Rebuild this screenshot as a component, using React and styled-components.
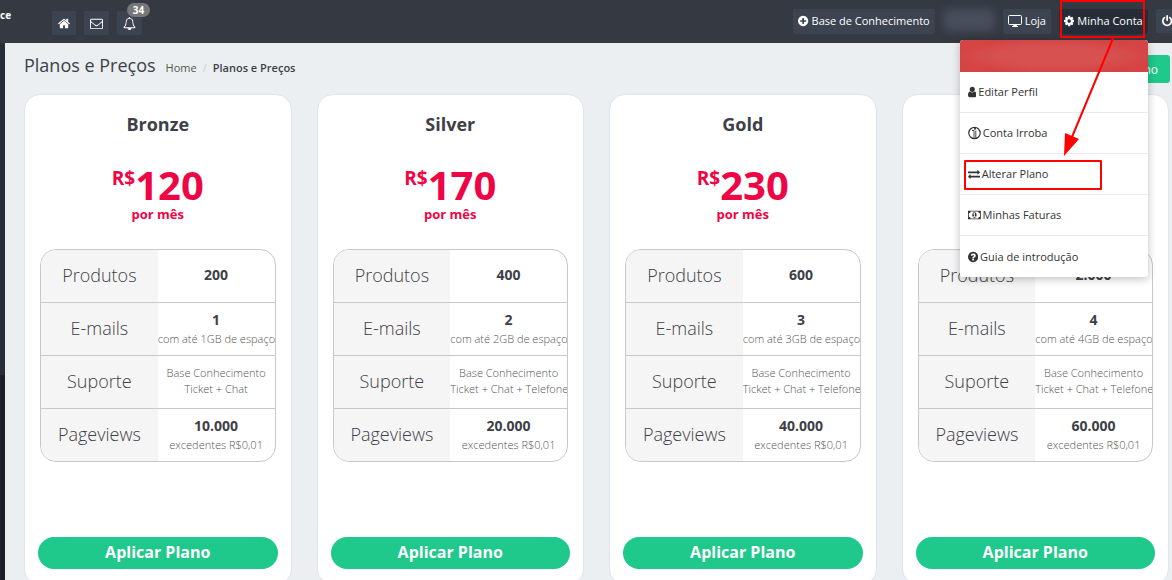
import styled, { createGlobalStyle } from "styled-components"

const GlobalStyle = createGlobalStyle`
    * {
        box-sizing: border-box;
    }

    body {
        margin: 0;
        background-color: #ebeff2;
        color: #3e4047;
        font-family: "Open Sans", "Noto Sans", sans-serif;
        font-size: 12px;
        overflow-x: hidden;
    }

    button {
        font-family: inherit;
        border: none;
        cursor: pointer;
    }
`

const green = "#1ec98b"
const mark = "#ff0000"

/* icons: [viewBox, path] */
const circle =
    "M1664 896q0 209-103 385.5t-279.5 279.5-385.5 103-385.5-103-279.5-279.5-103-385.5 103-385.5 279.5-279.5 385.5-103 385.5 103 279.5 279.5 103 385.5z"

const icons = {
    home: [
        "64 0 1664 1792",
        "M1472 992v480q0 26-19 45t-45 19h-384v-384h-256v384h-384q-26 0-45-19t-19-45v-480q0-1 .5-3t.5-3l575-474 575 474q1 2 1 6zm223-69l-62 74q-8 9-21 11h-3q-13 0-21-7l-692-577-692 577q-12 8-24 7-13-2-21-11l-62-74q-8-10-7-23.5t11-21.5l719-599q32-26 76-26t76 26l244 204v-195q0-14 9-23t23-9h192q14 0 23 9t9 23v408l219 182q10 8 11 21.5t-7 23.5z",
    ],
    envelope: [
        "0 0 1792 1792",
        "M1664 1504v-768q-32 36-69 66-268 206-426 338-51 43-83 67t-86.5 48.5-102.5 24.5h-2q-48 0-102.5-24.5t-86.5-48.5-83-67q-158-132-426-338-37-30-69-66v768q0 13 9.5 22.5t22.5 9.5h1472q13 0 22.5-9.5t9.5-22.5zm0-1051v-24.5l-.5-13-3-12.5-5.5-9-9-7.5-14-2.5h-1472q-13 0-22.5 9.5t-9.5 22.5q0 168 147 284 193 152 401 317 6 5 35 29.5t46 37.5 44.5 31.5 50.5 27.5 43 9h2q20 0 43-9t50.5-27.5 44.5-31.5 46-37.5 35-29.5q208-165 401-317 54-43 100.5-115.5t46.5-131.5zm128-37v1088q0 66-47 113t-113 47h-1472q-66 0-113-47t-47-113v-1088q0-66 47-113t113-47h1472q66 0 113 47t47 113z",
    ],
    bell: [
        "0 0 1792 1792",
        "M912 1696q0-16-16-16-59 0-101.5-42.5t-42.5-101.5q0-16-16-16t-16 16q0 73 51.5 124.5t124.5 51.5q16 0 16-16zm-666-288h1300q-266-300-266-832 0-51-24-105t-69-103-121.5-80.5-169.5-31.5-169.5 31.5-121.5 80.5-69 103-24 105q0 532-266 832zm1482 0q0 52-38 90t-90 38h-448q0 106-75 181t-181 75-181-75-75-181h-448q-52 0-90-38t-38-90q50-42 91-88t85-119.5 74.5-158.5 50-206 19.5-260q0-152 117-282.5t307-158.5q-8-19-8-39 0-40 28-68t68-28 68 28 28 68q0 20-8 39 190 28 307 158.5t117 282.5q0 139 19.5 260t50 206 74.5 158.5 85 119.5 91 88z",
    ],
    plus: [
        "128 0 1536 1792",
        "M1344 960v-128q0-26-19-45t-45-19h-256v-256q0-26-19-45t-45-19h-128q-26 0-45 19t-19 45v256h-256q-26 0-45 19t-19 45v128q0 26 19 45t45 19h256v256q0 26 19 45t45 19h128q26 0 45-19t19-45v-256h256q26 0 45-19t19-45z" +
            circle,
    ],
    cog: [
        "128 0 1536 1792",
        "M1152 896q0-106-75-181t-181-75-181 75-75 181 75 181 181 75 181-75 75-181zm512-109v222q0 12-8 23t-20 13l-185 28q-19 54-39 91 35 50 107 138 10 12 10 25t-9 23q-27 37-99 108t-94 71q-12 0-26-9l-138-108q-44 23-91 38-16 136-29 186-7 28-36 28h-222q-14 0-24.5-8.5t-11.5-21.5l-28-184q-49-16-90-37l-141 107q-10 9-25 9-14 0-25-11-126-114-165-168-7-10-7-23 0-12 8-23 15-21 51-66.5t54-70.5q-27-50-41-99l-183-27q-13-2-21-12.5t-8-23.5v-222q0-12 8-23t19-13l186-28q14-46 39-92-40-57-107-138-10-12-10-24 0-10 9-23 26-36 98.5-107.5t94.5-71.5q13 0 26 10l138 107q44-23 91-38 16-136 29-186 7-28 36-28h222q14 0 24.5 8.5t11.5 21.5l28 184q49 16 90 37l142-107q9-9 24-9 13 0 25 10 129 119 165 170 7 8 7 22 0 12-8 23-15 21-51 66.5t-54 70.5q26 50 41 98l183 28q13 2 21 12.5t8 23.5z",
    ],
    power: [
        "128 0 1536 1792",
        "M1664 896q0 156-61 298t-164 245-245 164-298 61-298-61-245-164-164-245-61-298q0-182 80.5-343t226.5-270q43-32 95.5-25t83.5 50q32 42 24.5 94.5t-49.5 84.5q-98 74-151.5 181t-53.5 228q0 104 40.5 198.5t109.5 163.5 163.5 109.5 198.5 40.5 198.5-40.5 163.5-109.5 109.5-163.5 40.5-198.5q0-121-53.5-228t-151.5-181q-42-32-49.5-84.5t24.5-94.5q31-43 84-50t95 25q146 109 226.5 270t80.5 343zm-640-768v640q0 52-38 90t-90 38-90-38-38-90v-640q0-52 38-90t90-38 90 38 38 90z",
    ],
    user: [
        "256 0 1280 1792",
        "M1536 1399q0 109-62.5 187t-150.5 78h-854q-88 0-150.5-78t-62.5-187q0-85 8.5-160.5t31.5-152 58.5-131 94-89 134.5-34.5q131 128 313 128t313-128q76 0 134.5 34.5t94 89 58.5 131 31.5 152 8.5 160.5zm-256-887q0 159-112.5 271.5t-271.5 112.5-271.5-112.5-112.5-271.5 112.5-271.5 271.5-112.5 271.5 112.5 112.5 271.5z",
    ],
    exchange: [
        "0 0 1792 1792",
        "M1792 1184v192q0 13-9.5 22.5t-22.5 9.5h-1376v192q0 13-9.5 22.5t-22.5 9.5q-12 0-24-10l-319-320q-9-9-9-22 0-14 9-23l320-320q9-9 23-9 13 0 22.5 9.5t9.5 22.5v192h1376q13 0 22.5 9.5t9.5 22.5zm0-544q0 14-9 23l-320 320q-9 9-23 9-13 0-22.5-9.5t-9.5-22.5v-192h-1376q-13 0-22.5-9.5t-9.5-22.5v-192q0-13 9.5-22.5t22.5-9.5h1376v-192q0-14 9-23t23-9q12 0 24 10l319 319q9 9 9 23z",
    ],
    money: [
        "0 0 1920 1792",
        "M768 1152h384v-96h-128v-448h-114l-148 137 77 80q42-37 55-57h2v288h-128v96zm512-256q0 70-21 142t-59.5 134-101.5 101-138 39-138-39-101.5-101-59.5-134-21-142 21-142 59.5-134 101.5-101 138-39 138 39 101.5 101 59.5 134 21 142zm512 256v-512q-106 0-181-75t-75-181h-1152q0 106-75 181t-181 75v512q106 0 181 75t75 181h1152q0-106 75-181t181-75zm128-832v1152q0 26-19 45t-45 19h-1792q-26 0-45-19t-19-45v-1152q0-26 19-45t45-19h1792q26 0 45 19t19 45z",
    ],
    question: [
        "128 0 1536 1792",
        "M1024 1376v-192q0-14-9-23t-23-9h-192q-14 0-23 9t-9 23v192q0 14 9 23t23 9h192q14 0 23-9t9-23zm256-672q0-88-55.5-163t-138.5-116-170-41q-243 0-371 213-15 24 8 42l132 100q7 6 19 6 16 0 25-12 53-68 86-92 34-24 86-24 48 0 85.5 26t37.5 59q0 38-20 61t-68 45q-63 28-115.5 86.5t-52.5 125.5v36q0 14 9 23t23 9h192q14 0 23-9t9-23q0-19 21.5-49.5t54.5-49.5q32-18 49-28.5t46-35 44.5-48 28-60.5 12.5-81z" +
            circle,
    ],
}

const Svg = styled.svg`
    height: ${({ $size }) => $size}px;
    width: auto;
    flex: none;
    fill: currentColor;
    fill-rule: evenodd;
`

const Icon = ({ name, size = 12 }) => (
    <Svg viewBox={icons[name][0]} $size={size} aria-hidden="true">
        <path d={icons[name][1]} />
    </Svg>
)

const DesktopIcon = () => (
    <Svg viewBox="0 0 14 12" $size={12} aria-hidden="true">
        <rect
            x="0.5"
            y="0.5"
            width="13"
            height="9"
            rx="1"
            fill="none"
            stroke="currentColor"
        />
        <path d="M5.5 10h3l.5 1h1v1h-6v-1h1z" />
    </Svg>
)

const IrrobaIcon = () => (
    <Svg viewBox="0 0 13 14" $size={14} aria-hidden="true">
        <g fill="none" stroke="currentColor">
            <circle cx="6.5" cy="7" r="5.7" strokeWidth="1.2" />
            <path d="M4 4.5h2V12M7.8 4.5V12" strokeWidth="0.9" />
        </g>
        <circle cx="7" cy="2.8" r="1" />
    </Svg>
)

const Header = styled.header`
    position: relative;
    z-index: 2;
    display: flex;
    align-items: flex-start;
    height: 43px;
    background-color: #343942;
    color: #fff;
    overflow-x: clip;
`

const Brand = styled.strong`
    width: 52px;
    padding-top: 7px;
    font-size: 10px;
    line-height: 16px;
`

const Nav = styled.nav`
    display: flex;
    gap: 8px;
    padding-top: 11px;
`

const RightNav = styled(Nav)`
    margin-left: auto;
    margin-right: -6px;
    padding-top: 9px;
`

const NavButton = styled.button`
    position: relative;
    display: flex;
    align-items: center;
    justify-content: center;
    gap: 3px;
    height: 25px;
    padding: 0 5px 2px;
    border-radius: 2px;
    background-color: ${({ $active }) => ($active ? "#272d38" : "#3c4452")};
    color: #fff;
    font-size: 11px;
    line-height: 16px;
    white-space: nowrap;
`

const IconButton = styled(NavButton)`
    height: 24px;
    padding: 0 6px;
`

const Badge = styled.span`
    position: absolute;
    top: -8px;
    left: 10px;
    min-width: 23px;
    border-radius: 7px;
    background-color: #777;
    font-size: 10px;
    font-weight: 700;
    line-height: 14px;
    text-align: center;
`

const HiddenName = styled.span`
    width: 52px;
    height: 22px;
    border-radius: 8px;
    background-color: #484f5c;
    filter: blur(5px);
`

const Account = styled.div`
    position: relative;
`

const AccountOutline = styled.span`
    position: absolute;
    inset: -9px 3px -4px 1px;
    border: 2px solid ${mark};
    border-radius: 1px;
    z-index: 2;
    pointer-events: none;
`

const Arrow = styled.svg`
    position: absolute;
    top: 26px;
    left: 0;
    width: 64px;
    height: 124px;
    z-index: 2;
    pointer-events: none;
`

const Menu = styled.div`
    position: absolute;
    top: 31px;
    right: 0;
    width: 188px;
    border-radius: 3px;
    background-color: #fff;
    box-shadow: 0 2px 8px rgba(0, 0, 0, 0.25);
`

const MenuTitle = styled.div`
    height: 32px;
    border-radius: 3px 3px 0 0;
    background: radial-gradient(ellipse, #d75151 40%, #d54444 75%);
`

const MenuItem = styled.a`
    position: relative;
    display: flex;
    align-items: center;
    gap: 2px;
    height: 41px;
    padding: 0 8px;
    border-bottom: 1px solid #ebebeb;
    color: #333;
    font-size: 11px;
    line-height: 16px;
    text-decoration: none;

    &:last-child {
        border-bottom: none;
    }
`

const ItemOutline = styled.span`
    position: absolute;
    inset: 6px 46px 4px 4px;
    border: 2px solid ${mark};
    border-radius: 1px;
`

const Body = styled.div`
    display: flex;
`

const Sidebar = styled.aside`
    flex: none;
    width: 5px;
    background: linear-gradient(#272e38 332px, #1b1f27 332px);
`

const Main = styled.main`
    flex: 1;
    min-width: 0;
    padding: 12px 3px 20px 19px;
`

const TitleBar = styled.div`
    display: flex;
    align-items: flex-start;
    margin-bottom: 11px;
    height: 28px;
`

const PageTitle = styled.h1`
    margin: 0 10px 0 0;
    font-size: 18px;
    font-weight: 400;
    line-height: 20px;
`

const Breadcrumb = styled.nav`
    display: flex;
    gap: 6px;
    padding-top: 5px;
    font-size: 11px;
    line-height: 16px;

    a {
        color: #555;
        text-decoration: none;
    }

    span {
        color: #ccc;
    }

    strong {
        font-weight: 600;
    }
`

const ActionButton = styled.button`
    height: 28px;
    margin-left: auto;
    margin-right: -1px;
    padding: 0 12px;
    border-radius: 3px;
    background-color: ${green};
    color: #fff;
    font-size: 12px;
`

const Plans = styled.div`
    display: grid;
    grid-template-columns: repeat(4, 1fr);
    gap: 25px;
`

const Card = styled.section`
    padding: 15px 13px;
    border: 1px solid #e0e4ee;
    border-radius: 16px;
    background-color: #fff;
    text-align: center;
`

const PlanName = styled.h2`
    margin: 0;
    font-size: 18px;
    font-weight: 700;
    line-height: 28px;
`

const Price = styled.div`
    display: flex;
    justify-content: center;
    height: 45px;
    margin-top: 23px;
    color: #ee0545;
    font-size: 40px;
    font-weight: 700;
    line-height: 48px;

    span {
        font-size: 19px;
        line-height: 34px;
    }
`

const Period = styled.div`
    margin-bottom: 27px;
    color: #ee0545;
    font-size: 13px;
    font-weight: 700;
    line-height: 16px;
`

const Features = styled.div`
    margin: 0 2px 75px;
    border: 1px solid #c8c8c8;
    border-radius: 16px;
    overflow: hidden;

    table {
        width: 100%;
        table-layout: fixed;
        border-collapse: separate;
        border-spacing: 0;
    }

    th,
    td {
        height: 53px;
        padding: 0 0 2px;
        border-bottom: 1px solid #c8c8c8;
        white-space: nowrap;
    }

    tr:last-child > * {
        height: 52px;
        border-bottom: none;
    }

    th {
        background-color: #f5f5f5;
        font-size: 18px;
        font-weight: 300;
    }

    td {
        color: #555;
        font-size: 11px;
        font-weight: 300;
        line-height: 16px;
    }

    b {
        display: block;
        color: #3e4047;
        font-size: 14px;
        font-weight: 700;
        line-height: 22px;
    }
`

const ApplyButton = styled.button`
    display: block;
    width: 100%;
    height: 32px;
    padding: 0 0 2px;
    border-radius: 16px;
    background-color: ${green};
    color: #fff;
    font-size: 16px;
    font-weight: 700;
`

const plans = [
    {
        name: "Bronze",
        price: "120",
        products: "200",
        emails: "1",
        support: "Ticket + Chat",
        views: "10.000",
    },
    {
        name: "Silver",
        price: "170",
        products: "400",
        emails: "2",
        support: "Ticket + Chat + Telefone",
        views: "20.000",
    },
    {
        name: "Gold",
        price: "230",
        products: "600",
        emails: "3",
        support: "Ticket + Chat + Telefone",
        views: "40.000",
    },
    {
        name: "Platinum",
        price: "350",
        products: "2.000",
        emails: "4",
        support: "Ticket + Chat + Telefone",
        views: "60.000",
    },
]

const PlanCard = ({ plan }) => (
    <Card>
        <PlanName>{plan.name}</PlanName>
        <Price>
            <span>R$</span>
            {plan.price}
        </Price>
        <Period>por mês</Period>
        <Features>
            <table>
                <tbody>
                    <tr>
                        <th scope="row">Produtos</th>
                        <td>
                            <b>{plan.products}</b>
                        </td>
                    </tr>
                    <tr>
                        <th scope="row">E-mails</th>
                        <td>
                            <b>{plan.emails}</b>
                            com até {plan.emails}GB de espaço
                        </td>
                    </tr>
                    <tr>
                        <th scope="row">Suporte</th>
                        <td>
                            Base Conhecimento
                            <br />
                            {plan.support}
                        </td>
                    </tr>
                    <tr>
                        <th scope="row">Pageviews</th>
                        <td>
                            <b>{plan.views}</b>
                            excedentes R$0,01
                        </td>
                    </tr>
                </tbody>
            </table>
        </Features>
        <ApplyButton>Aplicar Plano</ApplyButton>
    </Card>
)

const AccountMenu = () => (
    <Account>
        <NavButton $active>
            <Icon name="cog" />
            Minha Conta
        </NavButton>
        <AccountOutline />
        <Menu>
            <MenuTitle />
            <MenuItem href="#perfil">
                <Icon name="user" />
                Editar Perfil
            </MenuItem>
            <MenuItem href="#irroba">
                <IrrobaIcon />
                Conta Irroba
            </MenuItem>
            <MenuItem href="#plano">
                <Icon name="exchange" />
                Alterar Plano
                <ItemOutline />
            </MenuItem>
            <MenuItem href="#faturas">
                <Icon name="money" />
                Minhas Faturas
            </MenuItem>
            <MenuItem href="#guia">
                <Icon name="question" />
                Guia de introdução
            </MenuItem>
        </Menu>
        <Arrow viewBox="0 0 64 124" aria-hidden="true">
            <path d="M55 1L13 102" stroke={mark} strokeWidth="2" />
            <path d="M5 121L6 98L20 104Z" fill={mark} />
        </Arrow>
    </Account>
)

const App = () => {
    return (
        <>
            <GlobalStyle />
            <Header>
                <Brand>ce</Brand>
                <Nav>
                    <IconButton aria-label="Início">
                        <Icon name="home" size={13} />
                    </IconButton>
                    <IconButton aria-label="Mensagens">
                        <Icon name="envelope" size={13} />
                    </IconButton>
                    <IconButton aria-label="Notificações">
                        <Icon name="bell" size={13} />
                        <Badge>34</Badge>
                    </IconButton>
                </Nav>
                <RightNav>
                    <NavButton>
                        <Icon name="plus" />
                        Base de Conhecimento
                    </NavButton>
                    <HiddenName />
                    <NavButton>
                        <DesktopIcon />
                        Loja
                    </NavButton>
                    <AccountMenu />
                    <IconButton aria-label="Sair">
                        <Icon name="power" />
                    </IconButton>
                </RightNav>
            </Header>
            <Body>
                <Sidebar />
                <Main>
                    <TitleBar>
                        <PageTitle>Planos e Preços</PageTitle>
                        <Breadcrumb>
                            <a href="#home">Home</a>
                            <span>/</span>
                            <strong>Planos e Preços</strong>
                        </Breadcrumb>
                        <ActionButton>Alterar Plano</ActionButton>
                    </TitleBar>
                    <Plans>
                        {plans.map((plan) => (
                            <PlanCard key={plan.name} plan={plan} />
                        ))}
                    </Plans>
                </Main>
            </Body>
        </>
    )
}

export default App
